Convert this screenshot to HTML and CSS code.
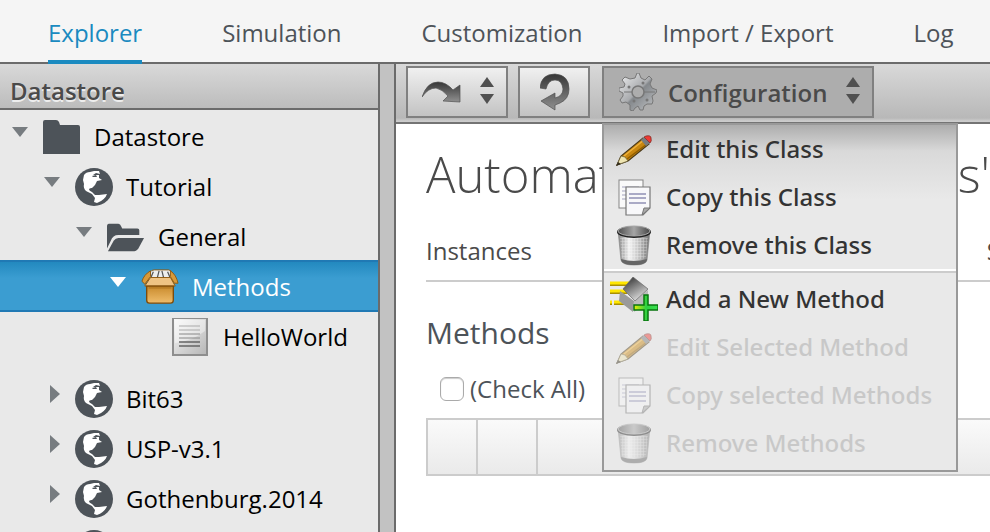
FILE: index.html
```html
<!DOCTYPE html>
<html lang="en">
<head>
<meta charset="utf-8">
<title>Explorer</title>
<link rel="stylesheet" href="styles.css">
</head>
<body>
<svg class="defs" aria-hidden="true">
  <defs>
    <linearGradient id="dark" x1="0" y1="0" x2="0" y2="1"><stop offset="0" stop-color="#363636"/><stop offset="1" stop-color="#909090"/></linearGradient>
    <linearGradient id="steel" x1="0" y1="0" x2="1" y2="1"><stop offset="0" stop-color="#f0f1f2"/><stop offset=".48" stop-color="#a9abae"/><stop offset=".52" stop-color="#84888c"/><stop offset="1" stop-color="#c4c6c8"/></linearGradient>
    <linearGradient id="carton" x1="0" y1="0" x2="0" y2="1"><stop offset="0" stop-color="#c98a2c"/><stop offset="1" stop-color="#efbd6c"/></linearGradient>
    <linearGradient id="bin" x1="0" y1="0" x2="1" y2="0"><stop offset="0" stop-color="#858585"/><stop offset=".35" stop-color="#f2f2f2"/><stop offset=".65" stop-color="#c4c4c4"/><stop offset="1" stop-color="#707070"/></linearGradient>
    <linearGradient id="lid" x1="0" y1="0" x2="1" y2="0"><stop offset="0" stop-color="#4f4f4f"/><stop offset=".5" stop-color="#a5a5a5"/><stop offset="1" stop-color="#474747"/></linearGradient>
    <linearGradient id="cube" x1="0.2" y1="0" x2=".8" y2="1"><stop offset="0" stop-color="#333"/><stop offset="1" stop-color="#f0f0f0"/></linearGradient>
    <linearGradient id="sheet" x1="0" y1="0" x2="1" y2="1"><stop offset="0" stop-color="#fafafa"/><stop offset="1" stop-color="#b5b5b5"/></linearGradient>
    <linearGradient id="plus" x1="0" y1="0" x2="1" y2="0"><stop offset="0" stop-color="#e8f000"/><stop offset=".5" stop-color="#2fd040"/><stop offset="1" stop-color="#38e050"/></linearGradient>
    <pattern id="mesh" width="3" height="3" patternUnits="userSpaceOnUse"><path d="M0 0H3M0 0V3" stroke="#fff" stroke-width="1" opacity=".5"/></pattern>
  </defs>
  <symbol id="down" viewBox="0 0 18 18"><path d="M1 4H17L9 14Z" fill="currentColor"/></symbol>
  <symbol id="right" viewBox="0 0 18 18"><path d="M7 0V18L17 9Z" fill="currentColor"/></symbol>
  <symbol id="folder" viewBox="0 0 38 38"><path d="M0 36V4Q0 2 2 2H13Q15 2 16 4L17 7H35Q37 7 37 9V36Z" fill="#4d5359"/></symbol>
  <symbol id="folder-open" viewBox="0 0 40 38"><path d="M0 33V8Q0 5 2 5H12Q14 5 15 8L16 10H32Q34 10 34 12V17H12Q6 17 4 23L0 31Z" fill="#4d5359"/><path d="M1 34L7 23Q9 20 12 20H39L33 31Q31 34 27 34Z" fill="#4d5359"/></symbol>
  <symbol id="globe" viewBox="0 0 38 38"><circle cx="19" cy="19" r="19" fill="#4d5359"/><path d="M8 12L9 7Q11 4 15 4L19 3H24L25 6L21 5L18 7L24 7L24 10L27 12L22 13L20 17L17 20L14 21Q14 23 17 24L20 27L24 27L32 26Q30 32 22 35L19 34L20 30L17 26L11 23Q8 20 9 16Z" fill="#fff"/><path d="M14 21L17 20L18 22L17 23ZM17 8L21 7L22 9L18 9Z" fill="#4d5359"/></symbol>
  <symbol id="box" viewBox="0 0 40 38">
    <path d="M10 3Q11 1 14 1H29Q32 1 33 5L35 12H7Z" fill="#ededed" stroke="#8f5a10" stroke-width="1"/>
    <path d="M10 10L13 3M17 10L19 2M24 10L22 2M31 10L28 3" stroke="#555" stroke-width="1.3"/>
    <path d="M10 2Q3 6 1 13L4 16L10 8ZM31 2Q37 6 39 15L35 15L31 8Z" fill="#d99a3a" stroke="#8f5a10"/>
    <path d="M10 9H31L36 18H4Z" fill="#efc384" stroke="#8f5a10"/>
    <path d="M6 18H34V33Q34 36 31 36H9Q6 36 6 33Z" fill="url(#carton)" stroke="#7d4a08" stroke-width="1.4"/>
    <path d="M8 20H32" stroke="#8f5a10" opacity=".6"/>
  </symbol>
  <symbol id="page" viewBox="0 0 38 38"><rect x="1" y="0" width="34" height="37" fill="url(#sheet)" stroke="#8e8e8e" stroke-width="2"/><path d="M3 2H33V13Q20 23 3 25Z" fill="#fff" opacity=".4"/><path d="M7 8H28M7 12H28" stroke="#aaa"/><path d="M7 16H28M7 20H28" stroke="#888"/><path d="M7 24H28M7 28H28" stroke="#666" stroke-width="1.5"/></symbol>
  <symbol id="updown" viewBox="0 0 14 28"><path d="M0 11L7 1L14 11Z" fill="#505050"/><path d="M0 18L7 28L14 18Z" fill="#505050"/></symbol>
  <symbol id="forward" viewBox="0 0 40 24"><path d="M0 17Q5 2 16 2Q24 2 31 10L38 5L38 22L21 21L26 16Q20 9 14 8Q6 8 0 17Z" fill="url(#dark)" stroke="#505050" stroke-width=".7"/></symbol>
  <symbol id="reload" viewBox="0 0 30 38"><path d="M0 15Q1 1 15 1Q29 2 29 16Q29 26 20 30L15 32L15 37L1 28L15 20V25Q23 23 23 16Q22 7 15 7Q8 7 6 16Z" fill="url(#dark)" stroke="#505050" stroke-width=".7"/></symbol>
  <symbol id="gear" viewBox="0 0 38 38">
    <path d="M16 5L18 0H20L22 5L26 7L30 3L33 6L31 11L33 15L38 17L37 20L33 23L34 28L33 31L28 31L25 33L24 37H21L19 33L16 35L14 38L11 37L11 32L7 29L3 30L1 27L4 23L4 20L0 18V15L5 14L6 11L3 7L6 4L11 6Z" fill="url(#steel)" stroke="#777" stroke-width="1"/>
    <path d="M5 19H13M25 19H36" stroke="#777"/><circle cx="19" cy="19" r="6" fill="#adadad" stroke="#777" stroke-width="1.5"/>
    <circle cx="10" cy="14" r="1.5" fill="#777"/><circle cx="24" cy="10" r="1.5" fill="#777"/><circle cx="15" cy="28" r="1.5" fill="#777"/><circle cx="28" cy="27" r="1.5" fill="#777"/>
  </symbol>
  <symbol id="pencil" viewBox="0 0 48 44"><path d="M7 38L11 29L33 11L39 17L18 34Z" fill="#c88710" stroke="#4a3a1a" stroke-width="1.2"/><path d="M14 29L34 13" stroke="#efb23d" stroke-width="1.5"/><path d="M17 32L37 17" stroke="#925e00" stroke-width="1.5"/><path d="M7 38L11 29L15 30L18 34Z" fill="#eee4b1" stroke="#655b35" stroke-width=".7"/><path d="M6 39L8 35L11 37Z" fill="#332c1c"/><path d="M31 13L34 10L40 16L36 19Z" fill="#777b7e"/><path d="M34 10L36 9Q41 8 41 11Q42 14 40 16Z" fill="#ee3a34" stroke="#802c25" stroke-width=".8"/></symbol>
  <symbol id="copy" viewBox="0 0 48 44"><rect x="9" y="5" width="24" height="28" fill="#fafafa" stroke="#858585"/><path d="M12 12H29M12 16H29M12 20H29M12 24H29" stroke="#a3a3bd"/><path d="M16 12H40V33L33 40H16Z" fill="#f8f8fa" stroke="#777" stroke-width="1.2"/><path d="M19 19H36M19 23H36M19 28H36" stroke="#9090b5" stroke-width="1.3"/><path d="M40 33H34L32 40Z" fill="#aaa" stroke="#777"/></symbol>
  <symbol id="trash" viewBox="0 0 48 44"><path d="M8 7H40L37 37Q36 42 24 42Q12 42 11 37Z" fill="url(#bin)" stroke="#888" stroke-width=".7"/><path d="M10 15H38L36 35Q24 38 12 35Z" fill="url(#mesh)"/><path d="M11 36Q24 40 37 36Q37 42 24 42Q11 42 11 36Z" fill="#666"/><ellipse cx="24" cy="9" rx="17" ry="6" fill="#222"/><ellipse cx="24" cy="8" rx="16" ry="5" fill="url(#lid)" stroke="#aaa"/></symbol>
  <symbol id="add" viewBox="0 0 48 44"><path d="M0 7H21M0 15H17M0 26H2M4 26H17" stroke="#a98f00" stroke-width="4"/><path d="M0 6H21M0 14H17M0 25H2M4 25H17" stroke="#ffe600" stroke-width="3"/><path d="M10 14L24 24L23 35L9 24Z" fill="#9a9a9a"/><path d="M24 24L38 13L38 25L24 35Z" fill="#bcbcbc"/><path d="M23 0L38 12L25 24L13 12Z" fill="url(#cube)" stroke="#666" stroke-width=".7"/><path d="M34 18H38V28H48V33H38V44H34V33H24V28H34Z" fill="url(#plus)" stroke="#08750f" stroke-width="1.5"/></symbol>
</svg>

<nav class="tabs">
  <a class="tab active" href="#explorer">Explorer</a>
  <a class="tab" href="#simulation">Simulation</a>
  <a class="tab" href="#customization">Customization</a>
  <a class="tab" href="#import-export">Import / Export</a>
  <a class="tab" href="#log">Log</a>
</nav>

<div class="workspace">
  <aside class="sidebar">
    <h2 class="side-title">Datastore</h2>
    <ul class="tree">
      <li class="node"><svg class="arrow"><use href="#down"/></svg><svg class="icon"><use href="#folder"/></svg><span>Datastore</span></li>
      <li class="node level1"><svg class="arrow"><use href="#down"/></svg><svg class="icon"><use href="#globe"/></svg><span>Tutorial</span></li>
      <li class="node level2"><svg class="arrow"><use href="#down"/></svg><svg class="icon"><use href="#folder-open"/></svg><span>General</span></li>
      <li class="node level3 selected"><svg class="arrow"><use href="#down"/></svg><svg class="icon"><use href="#box"/></svg><span>Methods</span></li>
      <li class="node level4 last"><svg class="arrow"></svg><svg class="icon"><use href="#page"/></svg><span>HelloWorld</span></li>
      <li class="node level1"><svg class="arrow"><use href="#right"/></svg><svg class="icon"><use href="#globe"/></svg><span>Bit63</span></li>
      <li class="node level1"><svg class="arrow"><use href="#right"/></svg><svg class="icon"><use href="#globe"/></svg><span>USP-v3.1</span></li>
      <li class="node level1"><svg class="arrow"><use href="#right"/></svg><svg class="icon"><use href="#globe"/></svg><span>Gothenburg.2014</span></li>
      <li class="node level1"><svg class="arrow"></svg><svg class="icon"><use href="#globe"/></svg></li>
    </ul>
  </aside>
  <div class="splitter"></div>
  <main class="main">
    <div class="toolbar">
      <button class="tool" type="button" aria-label="Forward"><svg width="40" height="24"><use href="#forward"/></svg><svg class="updown"><use href="#updown"/></svg></button>
      <button class="tool reload" type="button" aria-label="Reload"><svg width="30" height="38"><use href="#reload"/></svg></button>
      <div class="config">
        <button class="tool open" type="button" aria-haspopup="true" aria-expanded="true"><svg width="38" height="38"><use href="#gear"/></svg><span class="config-label">Configuration</span><svg class="updown"><use href="#updown"/></svg></button>
        <div class="menu">
          <button class="item" type="button"><svg><use href="#pencil"/></svg>Edit this Class</button>
          <button class="item" type="button"><svg><use href="#copy"/></svg>Copy this Class</button>
          <button class="item" type="button"><svg><use href="#trash"/></svg>Remove this Class</button>
          <hr class="divider">
          <button class="item" type="button"><svg><use href="#add"/></svg>Add a New Method</button>
          <button class="item" type="button" disabled><svg><use href="#pencil"/></svg>Edit Selected Method</button>
          <button class="item" type="button" disabled><svg><use href="#copy"/></svg>Copy selected Methods</button>
          <button class="item" type="button" disabled><svg><use href="#trash"/></svg>Remove Methods</button>
        </div>
      </div>
    </div>
    <div class="content">
      <h1 class="title"><span>Automat</span><span>s'</span></h1>
      <div class="facts"><span>Instances</span><span>S</span></div>
      <h2 class="section">Methods</h2>
      <label class="check"><input type="checkbox">(Check All)</label>
      <table class="grid"><tr><th class="narrow"></th><th class="mid"></th><th></th></tr></table>
    </div>
  </main>
</div>
</body>
</html>
```

FILE: styles.css
```css
* { box-sizing: border-box; }
body {
  margin: 0;
  height: 100vh;
  overflow: hidden;
  display: flex;
  flex-direction: column;
  background: #fff;
  color: #4a4a4a;
  font: 24px/32px "Open Sans", sans-serif;
}
svg { display: block; flex: none; overflow: visible; }
.defs { position: absolute; width: 0; height: 0; }
h1, h2, ul { margin: 0; padding: 0; }
button { font: inherit; color: inherit; }

.tabs {
  flex: none;
  display: flex;
  gap: 80px;
  height: 64px;
  padding-left: 48px;
  background: #f5f5f5;
  border-bottom: 2px solid #6b6b6b;
}
.tab {
  height: 64px;
  padding-top: 17px;
  white-space: nowrap;
  color: #4d5359;
  text-decoration: none;
}
.tab.active { color: #1a8ac0; border-bottom: 4px solid #1a8ac0; }

.workspace { flex: 1; min-height: 0; display: flex; }
.sidebar { flex: none; width: 378px; background: #e9e9e9; overflow: hidden; }
.side-title {
  height: 46px;
  padding: 11px 10px 0;
  border-bottom: 2px solid #6b6b6b;
  background: linear-gradient(#d9d9d9, #bcbcbc);
  font-size: 24px;
  font-weight: 600;
  text-shadow: 0 2px 0 #eee;
}
.tree { list-style: none; padding-top: 2px; color: #000; }
.node { display: flex; align-items: center; height: 50px; padding-left: 11px; }
.level1 { padding-left: 43px; }
.level2 { padding-left: 75px; }
.level3 { padding-left: 109px; }
.level4 { padding-left: 140px; }
.last { margin-bottom: 12px; }
.arrow { width: 18px; height: 18px; margin: 0 14px 10px 0; color: #777c80; }
.icon { width: 38px; height: 38px; margin-right: 13px; }
.selected {
  height: 52px;
  margin-top: -2px;
  color: #fff;
  font-weight: 500;
  padding-top: 2px;
  background: linear-gradient(#2389bf, #3b9dd1 16px);
  border: solid #2079b4;
  border-width: 2px 0;
}
.selected .arrow { color: #fff; }
.splitter { flex: none; width: 18px; background: #c2c2c2; border: solid #6b6b6b; border-width: 0 2px; }

.main { flex: 1; min-width: 0; }
.toolbar {
  display: flex;
  height: 60px;
  padding: 2px 10px 0;
  border-bottom: 2px solid #747474;
  background: linear-gradient(#d9d9d9, #b8b8b8 54px, #ccc 57px);
}
.tool {
  display: flex;
  align-items: center;
  justify-content: space-between;
  width: 102px;
  height: 52px;
  padding: 0 12px 0 14px;
  border: 2px solid #808080;
  background: linear-gradient(#f0f0f0, #c3c3c3);
}
.updown { width: 14px; height: 28px; margin-bottom: 4px; }
.reload { width: 72px; margin: 0 12px 0 10px; justify-content: center; }
.config { position: relative; }
.open { width: 272px; padding: 0 12px 0 15px; background: #adadad; }
.config-label { flex: 1; padding: 2px 0 0 11px; text-align: left; font-weight: 600; }
.menu {
  position: absolute;
  top: 57px;
  left: 0;
  z-index: 2;
  width: 356px;
  padding-bottom: 3px;
  border: 2px solid #999;
  background: linear-gradient(#adadad, #d9d9d9 26px, #e9e9e9 75px);
}
.item {
  display: flex;
  align-items: center;
  gap: 8px;
  width: 100%;
  height: 48px;
  padding: 0 6px;
  border: 0;
  background: none;
  color: #333;
  font-family: "Noto Sans", sans-serif;
  font-weight: 500;
  white-space: nowrap;
}
.item svg { width: 48px; height: 44px; }
.item:disabled { color: #c8c8c8; }
.item:disabled svg { opacity: .45; }
.divider { height: 4px; margin: 0 0 2px; border: 0; border-top: 2px solid #fff; border-bottom: 2px solid #ccc; }

.content { padding-left: 30px; overflow: hidden; }
.title {
  display: flex;
  justify-content: space-between;
  padding-top: 16px;
  font-size: 49px;
  line-height: 68px;
  font-weight: 300;
}
.facts {
  display: flex;
  justify-content: space-between;
  width: calc(100% + 10px);
  margin-top: 27px;
  padding-bottom: 13px;
  border-bottom: 2px solid #ccc;
}
.section { margin-top: 31px; font-size: 30px; line-height: 40px; font-weight: 400; color: #4d5359; }
.check { display: flex; align-items: center; gap: 6px; margin: 20px 0 13px 14px; color: #4d5359; }
.check input {
  appearance: none;
  width: 24px;
  height: 24px;
  margin: 0;
  border: 1px solid #aaa;
  border-radius: 6px;
  background: #fff;
  box-shadow: inset 0 1px 1px #ccc;
}
.grid { width: calc(100% + 10px); table-layout: fixed; border-collapse: collapse; }
.grid th { height: 56px; padding: 0; border: 2px solid #ccc; background: linear-gradient(#fafafa, #eaeaea); }
.grid .narrow { width: 50px; }
.grid .mid { width: 60px; }
```
